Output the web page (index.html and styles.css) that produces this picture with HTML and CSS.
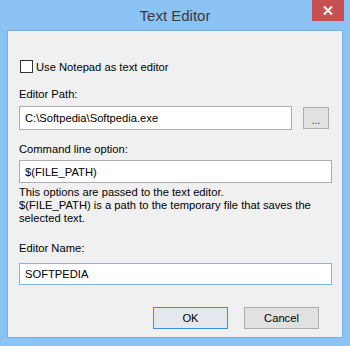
FILE: index.html
```html
<!DOCTYPE html>
<html lang="en">
<head>
  <meta charset="UTF-8"/>
  <meta name="viewport" content="width=device-width, initial-scale=1.0"/>
  <title>Text Editor</title>
  <link rel="stylesheet" href="styles.css">
</head>
<body>
  <div class="window">
    <div class="titlebar">
      <span class="title">Text Editor</span>
      <button class="close" type="button" aria-label="Close">
        <svg width="10" height="9" viewBox="0 0 10 9"><path d="M1 0.5 L9 8.5 M9 0.5 L1 8.5" stroke="#fff" stroke-width="2" fill="none"/></svg>
      </button>
    </div>

    <form class="client">
      <label class="check"><span class="box"></span>Use Notepad as text editor</label>

      <div class="label lbl-path">Editor Path:</div>
      <div class="path-row">
        <input class="field tall" value="C:\Softpedia\Softpedia.exe"/>
        <button type="button" class="btn browse">...</button>
      </div>

      <div class="label lbl-cmd">Command line option:</div>
      <input class="field mid" value="$(FILE_PATH)"/>
      <p class="help">This options are passed to the text editor.<br>$(FILE_PATH) is a path to the temporary file that saves the<br>selected text.</p>

      <div class="label lbl-name">Editor Name:</div>
      <input class="field focus" value="SOFTPEDIA"/>

      <!-- dialog buttons -->
      <div class="actions">
        <button type="button" class="btn default">OK</button>
        <button type="button" class="btn">Cancel</button>
      </div>
    </form>
  </div>
</body>
</html>
```

FILE: styles.css
```css
*{box-sizing:border-box;}
html,body{margin:0;height:100%;background:#fff;}
body{font-family:"Liberation Sans",Arial,sans-serif;font-size:11.2px;color:#000;}

.window{
  width:350px;height:346px;background:#8bc3f5;
  display:flex;flex-direction:column;padding:0 7px 8px 7px;
}
.titlebar{height:30px;display:grid;grid-template-columns:1fr auto 1fr;}
.title{grid-column:2;align-self:center;font-size:15px;color:#3a3a3a;margin-top:1px;}
.close{
  grid-column:3;justify-self:end;width:32px;height:21px;margin-right:-1px;
  border:none;background:#c75050;padding:0;display:flex;align-items:center;justify-content:center;
}

.client{
  flex:1;margin:0;background:#f0f0f0;border:1px solid #77afe4;
  padding:0 10px 0 11px;display:flex;flex-direction:column;
}
.check{display:flex;align-items:center;height:15px;margin-top:28px;margin-left:1px;gap:3px;}
.box{width:13px;height:13px;border:1px solid #333;background:#fff;}

.label{height:15px;line-height:15px;}
.lbl-path{margin-top:13px;}
.lbl-cmd{margin-top:12px;}
.lbl-name{margin-top:16px;}

.field{
  width:100%;height:22px;border:1px solid #abadb3;background:#fff;
  font:inherit;color:#000;padding:0 5px;outline:none;
}
.field.tall{height:24px;}
.field.mid{height:23px;margin-top:3px;}
.field.focus{border-color:#7eb4ea;margin-top:7px;}

.path-row{display:flex;align-items:center;margin-top:4px;margin-right:3px;gap:11px;}
.path-row .field{flex:1;width:auto;}

.btn{
  font:inherit;color:#000;background:#e1e1e1;border:1px solid #adadad;
  height:22px;width:75px;padding:0;
}
.browse{width:26px;height:22px;font-size:10px;padding-top:4px;color:#223;}
.default{border-color:#3c8fe0;background:#e5e8ec;}

.help{margin:3px 0 0;line-height:13px;white-space:nowrap;}

.actions{display:flex;justify-content:flex-end;gap:16px;margin-top:22px;margin-right:13px;}
```
